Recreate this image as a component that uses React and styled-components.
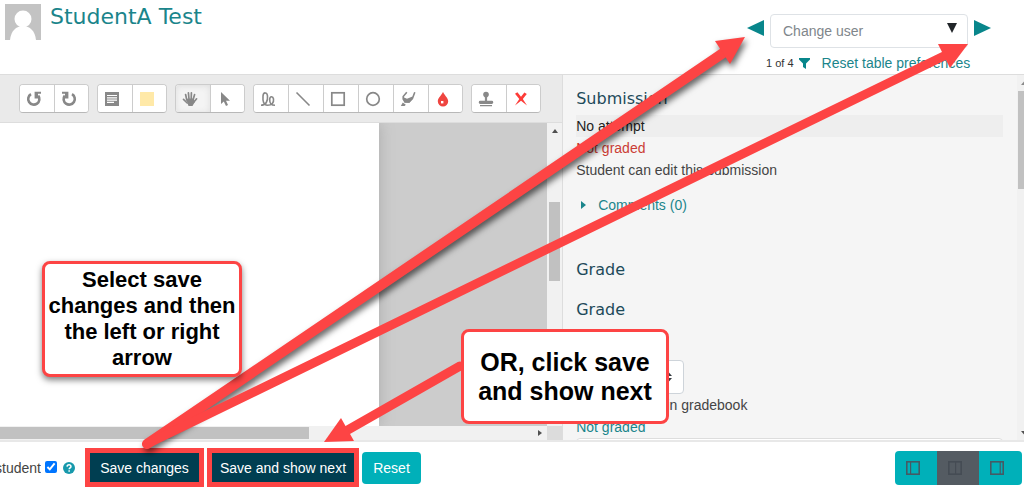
import React from "react";
import styled, { createGlobalStyle, css } from "styled-components";

const GlobalStyle = createGlobalStyle`
    * {
        box-sizing: border-box;
    }
    body {
        margin: 0;
        background: white;
        color: #444;
        font: 14px/22px "Liberation Sans", Arial, sans-serif;
    }
    button, input, select {
        font: inherit;
    }
    h1, h2, h3, p {
        margin: 0;
    }
    a {
        color: #1b858b;
        text-decoration: none;
    }
    svg {
        display: block;
    }
`

const RED = "#fd4444";

const Page = styled.div`
    position: relative;
    display: flex;
    flex-direction: column;
    height: 100vh;
    overflow: hidden;
`

/* header */

const Header = styled.header`
    display: flex;
    justify-content: space-between;
    flex: 0 0 74px;
`

const UserInfo = styled.div`
    display: flex;
    align-items: flex-start;
    gap: 9px;
    padding: 4px 5px;
`

const UserName = styled.h1`
    font: 22px/26px "DejaVu Sans", sans-serif;
`

const Navigation = styled.nav`
    display: flex;
    flex-direction: column;
    gap: 4px;
    padding: 14px 33px 0 0;
`

const UserPicker = styled.div`
    display: flex;
    align-items: flex-start;
    gap: 6px;
`

const NavLink = styled.a`
    padding-top: 6px;
    color: #08868b;
`

const ComboBox = styled.button`
    display: flex;
    justify-content: space-between;
    align-items: center;
    width: 198px;
    height: 34px;
    padding: 0 10px 0 12px;
    background: white;
    border: 1px solid #dee2e6;
    border-radius: 4px;
    color: #80868b;
    text-align: left;

    svg {
        margin-bottom: 6px;
        color: #212529;
    }
`

const TableLinks = styled.div`
    display: flex;
    align-items: center;
    padding-left: 19px;

    a + a {
        margin-left: 12px;
    }
`

const Counter = styled.span`
    margin-right: 5px;
    font-size: 11px;
    color: #333;
`

/* main area */

const Main = styled.main`
    display: flex;
    flex: 1;
    min-height: 0;
    border-top: 1px solid #ddd;
    border-bottom: 2px solid #e8e8e8;
`

const Review = styled.section`
    display: flex;
    flex-direction: column;
    width: 55%;
    border-right: 1px solid #ddd;
    background: #eaeaea;
`

const Toolbar = styled.div`
    display: flex;
    flex: 0 0 48px;
    gap: 8px;
    padding: 9px 19px 0;
    border-bottom: 1px solid #ddd;
`

const ToolGroup = styled.div`
    display: flex;
    height: 29px;
    background: white;
    border: 1px solid #ccc;
    border-bottom-color: #b8b8b8;
    border-radius: 4px;
    overflow: hidden;
`

const ToolButton = styled.button`
    width: 35px;
    padding: 0 0 0 6px;
    border: 0;
    background: white;
    color: #888;

    &:first-child {
        width: 34px;
    }
    &:last-child {
        width: 34px;
    }
    & + & {
        border-left: 1px solid #ccc;
    }
    ${props => props.$active && css`
        background: #f4f4f4;
        box-shadow: inset 0 1px 6px #ddd;
    `}
`

const Viewer = styled.div`
    display: grid;
    grid-template-columns: 1fr 15px;
    grid-template-rows: 1fr 14px;
    flex: 1;
    min-height: 0;
`

const Canvas = styled.div`
    display: flex;
    background: #ccc;
`

const Paper = styled.div`
    width: 69.3%;
    background: white;
    box-shadow: 0 0 14px #aaa;
    clip-path: inset(0 -18px 0 0);
`

const ScrollTrack = styled.div`
    display: flex;
    flex-direction: ${props => props.$horizontal ? 'row' : 'column'};
    justify-content: ${props => props.$horizontal ? 'space-between' : 'flex-start'};
    align-items: center;
    padding: ${props => props.$horizontal ? '0 5px 0 0' : '6px 0 0'};
    background: #f1f1f1;
    color: #505050;
`

const ViewerThumb = styled.div`
    width: 11px;
    height: 79px;
    margin-top: 69px;
    background: #c1c1c1;
`

const BottomThumb = styled.div`
    width: 57%;
    height: 12px;
    background: #c1c1c1;
`

const ScrollCorner = styled.div`
    background: #dcdcdc;
`

const Panel = styled.section`
    display: flex;
    flex: 1;
    min-width: 0;
    background: #f5f5f5;
`

const PanelBody = styled.div`
    flex: 1;
    padding: 13px 14px 0 13px;
    overflow: hidden;
`

const PanelTitle = styled.h3`
    margin-bottom: 18px;
    font: 16px/22px "DejaVu Sans", sans-serif;
    color: #1d4a5a;
`

const SubmissionTitle = styled(PanelTitle)`
    margin-bottom: 5px;
`

const Status = styled.p`
    line-height: 22px;
    color: ${props => props.$color || '#444'};
    background: ${props => props.$shaded ? '#eee' : 'transparent'};
`

const Comments = styled.a`
    display: flex;
    align-items: center;
    gap: 12px;
    margin: 13px 0 43px;
    padding-left: 5px;
`

const GradeSelect = styled.div`
    display: flex;
    align-items: center;
    width: 108px;
    height: 34px;
    margin-top: 39px;
    padding-right: 11px;
    background: white;
    border: 1px solid #ced4da;
    border-radius: 4px;

    select {
        flex: 1;
        min-width: 0;
        appearance: none;
        border: 0;
        background: transparent;
    }
`

const FeedbackBox = styled.div`
    height: 30px;
    background: white;
    border: 1px solid #ddd;
    border-radius: 4px;
`

const PanelScroll = styled.div`
    display: flex;
    flex-direction: column;
    justify-content: space-between;
    width: 7px;
    padding: 6px 0 5px;
    overflow: hidden;
    background: #f1f1f1;
`

const PanelThumb = styled.div`
    height: 98px;
    margin: 6px 0 auto 1px;
    background: #c1c1c1;
`

const ArrowEnd = styled.span`
    margin-left: 4px;
    color: ${props => props.$dim ? '#8a8a8a' : '#505050'};
`

/* footer */

const Footer = styled.footer`
    display: flex;
    align-items: center;
    flex: 0 0 46px;
    padding: 5px 2px 0 0;
`

const NotifyLabel = styled.label`
    display: flex;
    justify-content: flex-end;
    width: 41px;
    overflow: hidden;
`

const NotifyCheck = styled.input`
    width: 12px;
    height: 12px;
    margin: 0 6px 2px 4px;
`

const HelpLink = styled.a`
    margin-right: 10px;
`

const FooterButton = styled.button`
    width: 59px;
    height: 32px;
    padding: 0;
    border: 0;
    border-radius: 4px;
    background: #00b0b9;
    color: white;
    white-space: nowrap;
`

const MarkedButton = styled(FooterButton)`
    width: ${props => props.$wide ? 152 : 119}px;
    height: 39px;
    margin-right: 3px;
    border: 5px solid ${RED};
    border-radius: 0;
    background: #003e51;
`

const LayoutSwitch = styled.div`
    display: flex;
    margin-left: auto;
    border-radius: 4px;
    overflow: hidden;
`

const LayoutButton = styled.button`
    width: 42px;
    height: 34px;
    padding: 0 0 0 10px;
    border: 0;
    background: ${props => props.$active ? '#545b62' : '#00b0b9'};
    color: ${props => props.$active ? '#454c54' : '#455a64'};
    &:last-child {
        width: 43px;
    }
`

/* instructions drawn over the page */

const Callout = styled.div`
    position: absolute;
    display: flex;
    align-items: center;
    justify-content: center;
    left: ${props => props.$left}px;
    top: ${props => props.$top}px;
    width: ${props => props.$width}px;
    height: ${props => props.$height}px;
    border: 3px solid ${RED};
    border-radius: 8px;
    background: white;
    box-shadow: ${props => props.$flat ? 'none' : '0 3px 6px rgba(0, 0, 0, 0.5)'};
    color: black;
    font-weight: bold;
    font-size: ${props => props.$size}px;
    line-height: ${props => props.$line}px;
    text-align: center;
`

const Arrows = styled.svg`
    position: absolute;
    left: 0;
    top: 0;
    pointer-events: none;
`

function Icon({size = 16, children, ...rest}) {
    return (
        <svg width={size} height={size} viewBox="0 0 16 16" fill="none" stroke="currentColor" strokeWidth="1.4" {...rest}>
            {children}
        </svg>
    )
}

function Triangle({dir, width, height}) {
    const shapes = {
        up: "0,10 5,0 10,10",
        down: "0,0 10,0 5,10",
        left: "10,0 0,5 10,10",
        right: "0,0 10,5 0,10",
    }
    return (
        <svg width={width} height={height} viewBox="0 0 10 10" preserveAspectRatio="none">
            <polygon points={shapes[dir]} fill="currentColor" />
        </svg>
    )
}

const rotateShape = (
    <>
        <path d="M5 3.2A5.6 5.6 0 1 0 12.2 4.6" strokeWidth="2.6" />
        <path d="M8.6 .8H15V2.8H12V7.4H8.6Z" fill="currentColor" stroke="none" />
    </>
)

const toolGroups = [
    [
        {name: "Rotate left", icon: rotateShape},
        {name: "Rotate right", icon: <g transform="translate(16 0) scale(-1 1)">{rotateShape}</g>},
    ],
    [
        {name: "Comment", icon: <>
            <rect x="1" y="1" width="14" height="14" fill="currentColor" stroke="none" />
            <path d="M3 4.5h10M3 6.8h10M3 9.1h10M3 11.4h7" stroke="white" strokeWidth="1.2" />
        </>},
        {name: "Comment colour", icon: <rect x="1" y="1" width="14" height="14" fill="#ffe9a8" stroke="none" />},
    ],
    [
        {name: "Drag", active: true, icon: <>
            <path d="M4.8 9L3.6 3.5M7 8L6.4 1.8M9.2 8L9.4 1.8M11 9L12.6 3.5M11.5 11.5L14.6 7.8M5.2 12L1.5 8.4" strokeWidth="1.7" strokeLinecap="round" />
            <path d="M4 7.8L11.6 7.5L12.8 11L10.5 15H6.5Z" fill="currentColor" stroke="none" />
        </>},
        {name: "Select", icon: <path d="M4 1V13L6.8 10.5L9 15L11 14L9 9.8H13Z" fill="currentColor" stroke="none" />},
    ],
    [
        {name: "Pen", icon: <>
            <path d="M1 14.3C6 14.3 8 10 7.5 5C7.2 1 3.3 .8 3 5C2.6 10 3.5 14.3 7.5 14.3C12 14.3 14 11.5 13.5 8C13 5 9.8 5 9.7 8.5C9.6 12 11 14.3 15 14.3" strokeWidth="1.6" />
        </>},
        {name: "Line", icon: <path d="M1.5 1.5L14.5 14.5" strokeWidth="1.6" />},
        {name: "Rectangle", icon: <rect x="1.8" y="1.8" width="12.4" height="12.4" strokeWidth="1.7" />},
        {name: "Oval", icon: <circle cx="8" cy="8" r="6.3" strokeWidth="1.7" />},
        {name: "Highlight", icon: <>
            <path d="M6.8 1.2L3.2 5.5V8L5 11H9L12.4 7.5L14.8 1.2" strokeWidth="1.6" />
            <path d="M3 6L7 7.8L12.5 5.5V8L9.4 11.8L4.5 11.5Z" fill="currentColor" stroke="none" />
            <path d="M2.8 11.5L5.8 13.8L4.6 15H.8Z" fill="currentColor" stroke="none" />
        </>},
        {name: "Annotation colour", icon: <>
            <path d="M8 .8C9 4 13.2 7 13.2 10.2A5.2 5.2 0 0 1 2.8 10.2C2.8 7 7 4 8 .8Z" fill="#ef4540" stroke="none" />
            <rect x="6" y="10" width="2.4" height="2.4" fill="white" stroke="none" />
        </>},
    ],
    [
        {name: "Stamp", icon: <>
            <circle cx="8" cy="3.6" r="2.8" fill="currentColor" stroke="none" />
            <path d="M7.4 5H8.6V10H7.4Z" fill="currentColor" strokeWidth="1" />
            <rect x=".8" y="9.8" width="14.4" height="3.2" rx="1.4" fill="currentColor" stroke="none" />
            <path d="M2 14.6H14" strokeWidth="1.2" />
        </>},
        {name: "Delete stamp", icon: <path d="M4.4 1.2L8 5.8L11.4 1.6L13.8 3L9.8 7.9L14 14.4L8 9.8L2 14.4L6.3 7.9L2 2.8Z" fill="#fd3c38" stroke="none" />},
    ],
]

const layouts = [
    {name: "Collapse grade panel", bars: "M5.6 2V14"},
    {name: "Default layout", bars: "M8.6 2V14", active: true},
    {name: "Collapse review panel", bars: "M11.2 2V14"},
]

function GraderHeader() {
    return (
        <Header>
            <UserInfo>
                <svg width="36" height="36" viewBox="0 0 36 36">
                    <rect width="36" height="36" fill="#c3c3c3" />
                    <circle cx="18" cy="15" r="8.5" fill="white" />
                    <path d="M5 36C6 27 11 22 18 22S30 27 31 36Z" fill="white" />
                </svg>
                <UserName><a href="#user">StudentA Test</a></UserName>
            </UserInfo>
            <Navigation>
                <UserPicker>
                    <NavLink href="#previous" aria-label="Previous user"><Triangle dir="left" width={17} height={16} /></NavLink>
                    <ComboBox>
                        Change user
                        <Triangle dir="down" width={10} height={10} />
                    </ComboBox>
                    <NavLink href="#next" aria-label="Next user"><Triangle dir="right" width={17} height={16} /></NavLink>
                </UserPicker>
                <TableLinks>
                    <Counter>1 of 4</Counter>
                    <a href="#filter" aria-label="Filter">
                        <svg width="11" height="11" viewBox="0 0 11 11"><path d="M0 0H11V1.5L7 5.5V11L4 9V5.5L0 1.5Z" fill="#08868b" /></svg>
                    </a>
                    <a href="#reset">Reset table preferences</a>
                </TableLinks>
            </Navigation>
        </Header>
    )
}

function ReviewPanel() {
    return (
        <Review>
            <Toolbar>
                {toolGroups.map((group, i) => (
                    <ToolGroup key={i}>
                        {group.map(tool => (
                            <ToolButton key={tool.name} aria-label={tool.name} $active={tool.active}>
                                <Icon>{tool.icon}</Icon>
                            </ToolButton>
                        ))}
                    </ToolGroup>
                ))}
            </Toolbar>
            <Viewer>
                <Canvas><Paper /></Canvas>
                <ScrollTrack>
                    <Triangle dir="up" width={6} height={4} />
                    <ViewerThumb />
                </ScrollTrack>
                <ScrollTrack $horizontal>
                    <BottomThumb />
                    <Triangle dir="right" width={4} height={6} />
                </ScrollTrack>
                <ScrollCorner />
            </Viewer>
        </Review>
    )
}

function GradePanel() {
    return (
        <Panel>
            <PanelBody>
                <SubmissionTitle>Submission</SubmissionTitle>
                <Status $shaded $color="#222">No attempt</Status>
                <Status $color="#cb3d36">Not graded</Status>
                <Status>Student can edit this submission</Status>
                <Comments href="#comments">
                    <Triangle dir="right" width={5} height={8} />
                    Comments (0)
                </Comments>
                <PanelTitle>Grade</PanelTitle>
                <PanelTitle>Grade</PanelTitle>
                <GradeSelect>
                    <select aria-label="Grade" />
                    <svg width="7" height="10" viewBox="0 0 7 10"><path d="M0 4L3.5 0L7 4ZM0 6H7L3.5 10Z" fill="#343a40" /></svg>
                </GradeSelect>
                <Status>Current grade in gradebook</Status>
                <Status><a href="#gradebook">Not graded</a></Status>
                <FeedbackBox />
            </PanelBody>
            <PanelScroll>
                <ArrowEnd $dim><Triangle dir="up" width={7} height={4} /></ArrowEnd>
                <PanelThumb />
                <ArrowEnd><Triangle dir="down" width={7} height={4} /></ArrowEnd>
            </PanelScroll>
        </Panel>
    )
}

function GraderFooter() {
    return (
        <Footer>
            <NotifyLabel htmlFor="notify">student</NotifyLabel>
            <NotifyCheck id="notify" type="checkbox" defaultChecked />
            <HelpLink href="#help" aria-label="Help">
                <Icon size={12}>
                    <circle cx="8" cy="8" r="8" fill="#1799ac" stroke="none" />
                    <path d="M5.4 6.2C5.6 3 10.8 3 10.6 6.2C10.5 8 8.2 7.8 8.2 9.8M8.2 11V13" stroke="white" strokeWidth="2" />
                </Icon>
            </HelpLink>
            <MarkedButton>Save changes</MarkedButton>
            <MarkedButton $wide>Save and show next</MarkedButton>
            <FooterButton>Reset</FooterButton>
            <LayoutSwitch>
                {layouts.map(layout => (
                    <LayoutButton key={layout.name} aria-label={layout.name} $active={layout.active}>
                        <Icon>
                            <rect x="1.8" y="1.8" width="12.4" height="12.4" strokeWidth="1.6" />
                            <path d={layout.bars} strokeWidth="1.2" />
                        </Icon>
                    </LayoutButton>
                ))}
            </LayoutSwitch>
        </Footer>
    )
}

export default function App() {
    return (
        <Page>
            <GlobalStyle />
            <GraderHeader />
            <Main>
                <ReviewPanel />
                <GradePanel />
            </Main>
            <GraderFooter />
            <Arrows width="1024" height="488" fill={RED} stroke={RED}>
                <g style={{filter: "drop-shadow(2px 4px 3px rgba(0, 0, 0, 0.6))"}}>
                    <path d="M147 444L726 51" strokeWidth="10" strokeLinecap="round" />
                    <polygon points="745,37 715,41 730,64" stroke="none" />
                </g>
                <path d="M147 444L948 54" strokeWidth="9" strokeLinecap="round" />
                <polygon points="968,44 938,44 950,68" stroke="none" />
                <path d="M460 366L346 431" strokeWidth="9" strokeLinecap="round" />
                <polygon points="324,442 341,418 354,441" stroke="none" />
            </Arrows>
            <Callout $left={42} $top={261} $width={200} $height={116} $size={22} $line={26}>
                Select save changes and then the left or right arrow
            </Callout>
            <Callout $flat $left={461} $top={329} $width={208} $height={95} $size={25} $line={29}>
                OR, click save and show next
            </Callout>
        </Page>
    )
}
